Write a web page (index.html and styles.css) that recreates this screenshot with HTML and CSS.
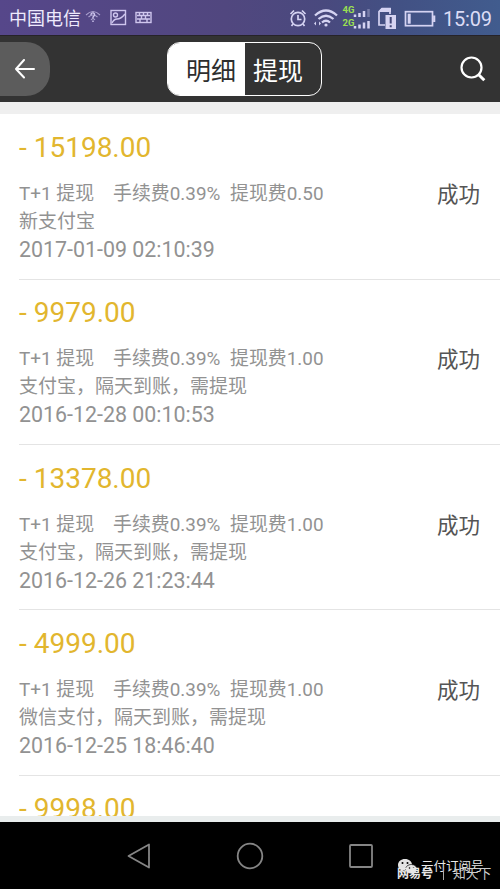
FILE: index.html
```html
<!DOCTYPE html>
<html lang="zh-CN">
<head>
<meta charset="utf-8">
<title>明细</title>
<link rel="stylesheet" href="styles.css">
</head>
<body>
<div class="phone">
  <div class="status">
    <span class="carrier">中国电信</span>
    <svg class="st-left" width="68" height="20" viewBox="0 0 68 20" fill="none" stroke="#cfc6ee" stroke-width="1.4">
      <g opacity=".7" stroke-width="1.1"><path d="M1 7Q8 0 15 7M3.500 9Q8 5 12.500 9M6 12Q8 9.500 10 12"/></g>
      <path d="M6 7Q6 4.500 8.500 5Q11 6.500 8 9V10.500M8 12.500V14"/>
      <rect x="26" y="2.500" width="14.500" height="14"/><circle cx="30.500" cy="7" r="2"/><path d="M27 15Q29 11 32 11Q36 11 40 6"/>
      <rect x="51" y="4.500" width="15" height="10"/><path d="M52 7.500H65M52 11H65M54.500 5V8M58.500 5V8M62.500 5V8M56.500 8V11M60.500 8V11M55 11V14M62 11V14"/>
    </svg>
    <svg class="st-right" width="150" height="34" viewBox="0 0 150 34" fill="none" stroke="#d5d3f2" stroke-width="1.700">
      <circle cx="10" cy="18" r="6.700"/><path d="M10 14V18.500H13.500M2.500 13L6 9.500M14 9.500L17.500 13M5 23L3.500 25M15 23L16.500 25"/>
      <g stroke-width="2.300"><path d="M27 14.500Q38 4.500 49 14.500M30.500 18Q38 11.500 45.500 18M34 21.500Q38 18 42 21.500"/></g>
      <circle cx="38" cy="24" r="1.600" fill="#d5d3f2" stroke="none"/><path d="M28 20.500L26 22.500L28 24.500ZM31 20.500L33 22.500L31 24.500Z" fill="#d5d3f2" stroke="none"/>
      <g class="net"><text x="54.500" y="12.300">4G</text><text x="54.500" y="25">2G</text></g>
      <g stroke-width="2.500"><path d="M67 16V13.500M71.500 16V12M76 16V10M67 27.500V25M71.500 27.500V23.500M76 27.500V21.500M80.500 27.500V20"/><path d="M80.500 16V8" opacity=".35"/></g>
      <path d="M97 24H91V10.500L94 7.500H102V13"/><path d="M91 10.500L94 7H103V11H91Z" fill="#d5d3f2" stroke="none"/>
      <rect x="97.500" y="14" width="10.500" height="14" fill="#d5d3f2" stroke="none"/><path d="M102.700 16V22.500M102.700 24.200V26.300" stroke="#424778" stroke-width="2"/>
      <rect x="117.500" y="10.700" width="27" height="14"/><path d="M146.200 14.500V21" stroke-width="2.200"/><rect x="119.700" y="12.700" width="3" height="10" fill="#d5d3f2" stroke="none"/>
    </svg>
    <span class="clock">15:09</span>
  </div>
  <header class="bar">
    <div class="back"><svg width="20" height="20" viewBox="0 0 20 20" fill="none" stroke="#fff" stroke-width="2" stroke-linecap="round" stroke-linejoin="round"><path d="M19 10H1M9 1L1 10L9 18.500"/></svg></div>
    <div class="tabs"><span class="tab active">明细</span><span class="tab">提现</span></div>
    <svg class="search" width="26" height="26" viewBox="0 0 26 26" fill="none" stroke="#fff"><circle cx="11.500" cy="11.500" r="10" stroke-width="2.200"/><path d="M18.500 18.500L24.300 24.300" stroke-width="3"/></svg>
  </header>
  <main class="list">
    <article class="row">
      <div class="amount">- 15198.00</div>
      <div class="fees"><span class="kind">T+1 提现</span><span class="rate">手续费0.39%</span><span>提现费0.50</span></div>
      <div class="source">新支付宝</div>
      <time class="date">2017-01-09 02:10:39</time>
      <span class="result">成功</span>
    </article>
    <article class="row">
      <div class="amount">- 9979.00</div>
      <div class="fees"><span class="kind">T+1 提现</span><span class="rate">手续费0.39%</span><span>提现费1.00</span></div>
      <div class="source">支付宝，隔天到账，需提现</div>
      <time class="date">2016-12-28 00:10:53</time>
      <span class="result">成功</span>
    </article>
    <article class="row">
      <div class="amount">- 13378.00</div>
      <div class="fees"><span class="kind">T+1 提现</span><span class="rate">手续费0.39%</span><span>提现费1.00</span></div>
      <div class="source">支付宝，隔天到账，需提现</div>
      <time class="date">2016-12-26 21:23:44</time>
      <span class="result">成功</span>
    </article>
    <article class="row">
      <div class="amount">- 4999.00</div>
      <div class="fees"><span class="kind">T+1 提现</span><span class="rate">手续费0.39%</span><span>提现费1.00</span></div>
      <div class="source">微信支付，隔天到账，需提现</div>
      <time class="date">2016-12-25 18:46:40</time>
      <span class="result">成功</span>
    </article>
    <article class="row">
      <div class="amount">- 9998.00</div>
    </article>
  </main>
  <nav class="nav">
    <svg width="24" height="26" viewBox="0 0 24 26"><path d="M1.500 13L22 1.500V24.500Z"/></svg>
    <svg width="28" height="28" viewBox="0 0 28 28"><circle cx="14" cy="14" r="12.300"/></svg>
    <svg width="24" height="24" viewBox="0 0 24 24"><rect x="1" y="1" width="22" height="22" rx="1"/></svg>
    <div class="mark wechat">
      <svg width="20" height="17" viewBox="0 0 20 17"><path class="bubble" d="M7 0C3 0 0 2.600 0 6C0 8 1 9.500 2.500 10.500L2 13L5 11.500H8C11 11 14 9 14 5.500C14 2.500 11 0 7 0Z"/><path class="bubble edge" d="M13.500 5.500C10 5.500 7.500 7.700 7.500 10.300C7.500 13 10 15 13.500 15L17 16.300L16.500 14.200C18 13.300 19 12 19 10.300C19 7.700 17 5.500 13.500 5.500Z"/><g class="eyes"><circle cx="4.500" cy="4" r="1"/><circle cx="9.500" cy="4" r="1"/><circle cx="11.500" cy="9" r=".8"/><circle cx="15.500" cy="9" r=".8"/></g></svg>
      <span>云付订阅号</span>
    </div>
    <div class="mark netease"><b>网易号</b><i></i><span>知天下</span></div>
  </nav>
</div>
</body>
</html>
```
FILE: styles.css
```css
* { box-sizing: border-box; }
body { margin: 0; background: #000; font-family: Roboto, "Noto Sans CJK SC", sans-serif; }
svg { display: block; flex: none; }
.phone { width: 500px; height: 889px; display: flex; flex-direction: column; overflow: hidden; }

.status { height: 35px; flex: none; display: flex; align-items: center; padding-left: 9px; color: #eeeafd; background: linear-gradient(90deg, #56478a 0%, #51477f 45%, #49497e 65%, #425184 80%, #415c8e 100%); }
.carrier { font-size: 18px; line-height: 32px; padding-top: 3px; width: 72px; white-space: nowrap; }
.st-left { margin-left: 4px; }
.st-right { margin-left: 135px; }
.net { fill: #9be052; stroke: none; font: bold 9.5px Roboto, sans-serif; }
.clock { font-size: 20px; color: #dcdcf5; margin: 2px 0 0 5px; letter-spacing: -.2px; }

.bar { height: 67px; flex: none; background: #333; display: flex; align-items: center; border-top: 1px solid #262329; }
.back { width: 50px; height: 54px; background: #5c5c5c; border-radius: 0 24px 24px 0; display: flex; align-items: center; padding-left: 15px; }
.tabs { width: 155px; height: 54px; margin-left: 117px; border: 1.5px solid #fff; border-radius: 13px; display: flex; overflow: hidden; }
.tab { flex: 1; color: #fff; font-size: 25px; line-height: 52px; padding: 3px 0 0 8px; white-space: nowrap; }
.tab.active { flex: 0 0 77px; background: #fff; color: #2e2e2e; padding-left: 18px; }
.search { margin-left: 138px; }

.list { height: 720px; flex: none; background: #fff; border-top: 12px solid #efefef; border-bottom: 6px solid #e9eded; overflow: hidden; }
.row { height: 165.3px; margin-left: 19px; padding-top: 13.6px; border-bottom: 1px solid #e4e4e4; display: grid; grid-template-columns: 1fr 63px; grid-template-rows: 38px 14px 28px 28px 28px; align-content: start; color: #929292; }
.row:first-child { height: 165.7px; }
.amount { grid-area: 1 / 1; font-size: 28px; line-height: 40px; color: #e2b62e; }
.fees { grid-area: 3 / 1; display: flex; font-size: 18.9px; line-height: 28px; white-space: nowrap; }
.kind { width: 94px; }
.rate { width: 117px; }
.source { grid-area: 4 / 1; font-size: 19px; line-height: 28px; white-space: nowrap; }
.date { grid-area: 5 / 1; font-size: 21.4px; line-height: 28px; }
.result { grid-area: 3 / 2; font-size: 21.5px; line-height: 29px; color: #555; }

.nav { height: 67px; flex: none; background: #000; position: relative; display: flex; align-items: center; padding-left: 127px; }
.nav > svg { fill: none; stroke: #858585; stroke-width: 1.8; stroke-linejoin: round; }
.nav > svg + svg { margin-left: 85px; }
.mark { position: absolute; display: flex; align-items: center; white-space: nowrap; color: #e8e8e8; }
.wechat { left: 398px; top: 35px; font-size: 12.5px; line-height: 20px; gap: 3px; }
.bubble { fill: #e4e4e4; }
.edge { stroke: #000; stroke-width: .7; }
.eyes { fill: #000; }
.netease { left: 397px; top: 43px; font-size: 12px; line-height: 18px; }
.netease i { width: 1px; height: 12px; background: #aaa; margin: 0 9px 0 10px; }
.netease span { font-size: 12.8px; color: #ccc; }
```
